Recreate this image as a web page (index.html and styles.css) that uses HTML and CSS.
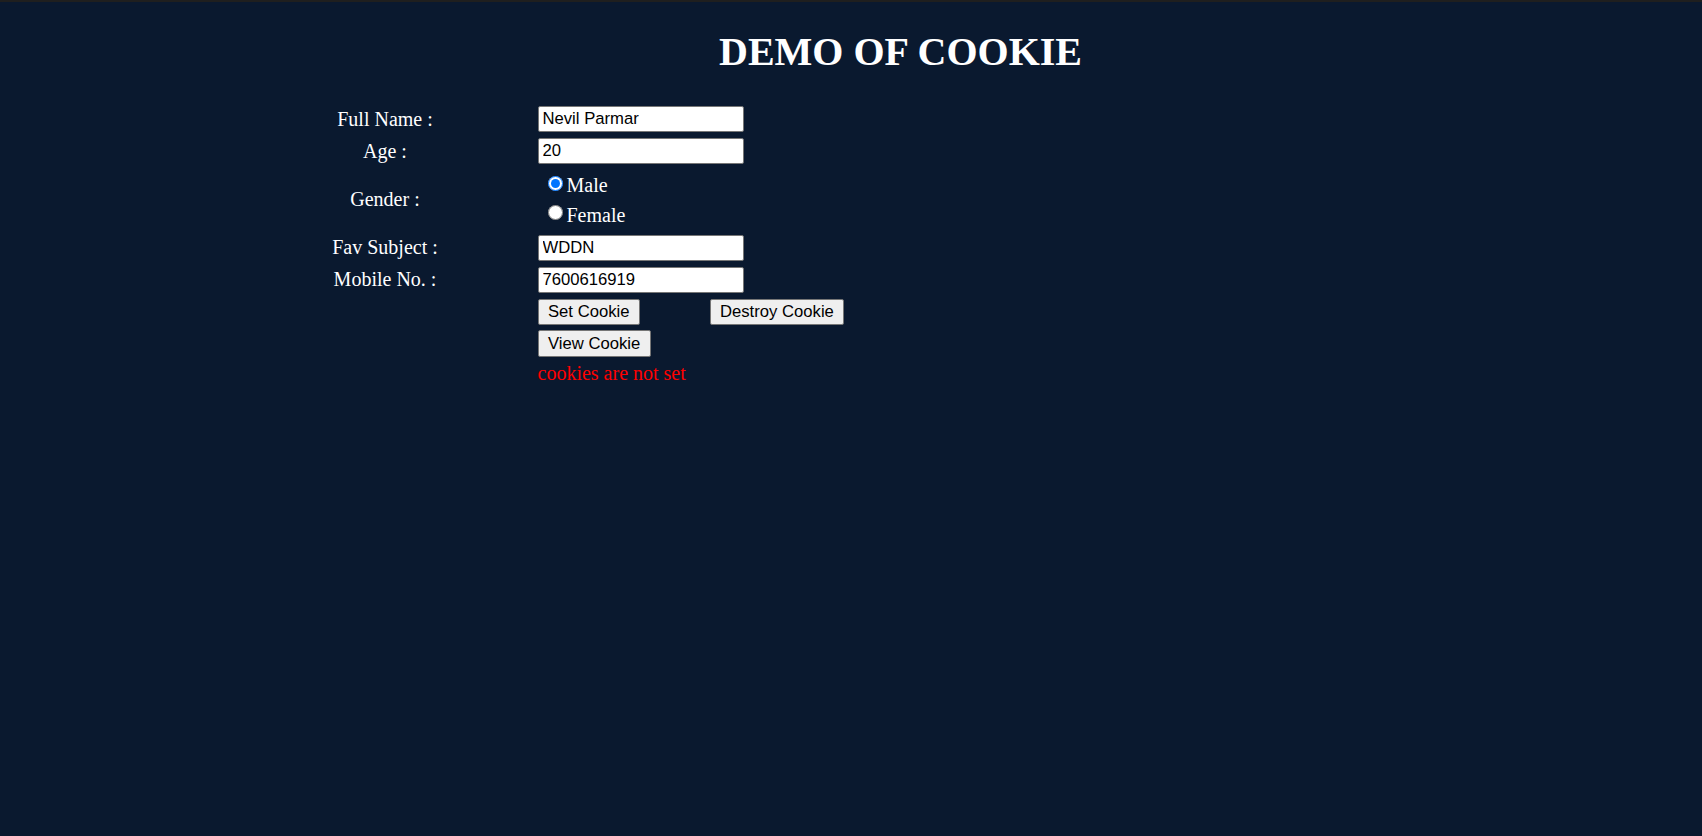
FILE: index.html
```html
<!DOCTYPE html>
<html lang="en">
<head>
<meta charset="utf-8">
<title>Demo of Cookie</title>
<link rel="stylesheet" href="styles.css">
</head>
<body>
<div class="topstrip"></div>
<h1 class="title">DEMO OF COOKIE</h1>
<form class="form">
  <label class="label" for="fname">Full Name :</label>
  <input class="field" id="fname" type="text" value="Nevil Parmar">

  <label class="label" for="age">Age :</label>
  <input class="field" id="age" type="text" value="20">

  <span class="label">Gender :</span>
  <div class="radios">
    <label class="radio-line"><input class="radio" type="radio" name="g" checked>Male</label>
    <label class="radio-line"><input class="radio" type="radio" name="g">Female</label>
  </div>

  <label class="label" for="subj">Fav Subject :</label>
  <input class="field" id="subj" type="text" value="WDDN">

  <label class="label" for="mob">Mobile No. :</label>
  <input class="field" id="mob" type="text" value="7600616919">

  <button class="btn btn-set" type="button">Set Cookie</button>
  <button class="btn btn-destroy" type="button">Destroy Cookie</button>

  <button class="btn btn-view" type="button">View Cookie</button>

  <p class="status">cookies are not set</p>
</form>
</body>
</html>
```

FILE: styles.css
```css
html, body {
  margin: 0;
  padding: 0;
}

body {
  background: #0a192f;
  color: #ffffff;
  font-family: "Liberation Serif", "Times New Roman", serif;
  font-size: 20px;
  min-height: 836px;
}

.topstrip {
  height: 2px;
  background: #1f1f1f;
}

.title {
  margin: 0 0 0 99px;
  padding-top: 28px;
  font-size: 40px;
  line-height: 44px;
  font-weight: bold;
  text-align: center;
  color: #ffffff;
}

.form {
  display: grid;
  grid-template-columns: 295px 167px auto;
  column-gap: 5px;
  row-gap: 5.7px;
  margin: 32px 0 0 237.5px;
}

.label {
  grid-column: 1;
  justify-self: center;
  align-self: center;
  line-height: 23px;
  white-space: nowrap;
}

.field {
  grid-column: 2 / span 2;
  justify-self: start;
  box-sizing: border-box;
  width: 206px;
  height: 26.3px;
  margin: 0;
  padding: 0 4px;
  border: 1px solid #767676;
  border-radius: 2px;
  background: #ffffff;
  color: #000000;
  font-family: "Liberation Sans", Arial, sans-serif;
  font-size: 16.67px;
}

.radios {
  grid-column: 2 / span 2;
  display: flex;
  flex-direction: column;
}

.radio-line {
  display: flex;
  align-items: center;
  height: 29.45px;
  line-height: 23px;
  padding-top: 2px;
  box-sizing: border-box;
}

.radio {
  width: 15px;
  height: 15px;
  margin: -5px 4px 0 10px;
  accent-color: #0075ff;
}

.btn {
  justify-self: start;
  box-sizing: border-box;
  height: 26.3px;
  margin: 0;
  padding: 0 9.5px;
  border: 1px solid #767676;
  border-radius: 2px;
  background: #efefef;
  color: #000000;
  font-family: "Liberation Sans", Arial, sans-serif;
  font-size: 16.67px;
}

.btn-set {
  grid-column: 2;
}

.btn-destroy {
  grid-column: 3;
}

.btn-view {
  grid-column: 2;
}

.status {
  grid-column: 2 / span 2;
  margin: 0;
  color: #ff0000;
  line-height: 23px;
  white-space: nowrap;
}
```
